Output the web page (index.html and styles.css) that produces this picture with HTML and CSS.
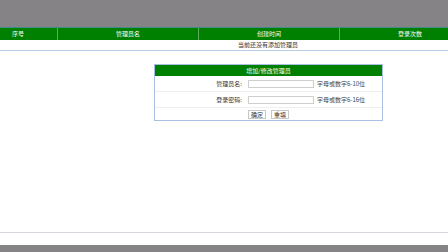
FILE: index.html
```
<!DOCTYPE html>
<html lang="zh-CN">
<head>
    <meta charset="UTF-8">
    <meta name="viewport" content="width=device-width, initial-scale=1.0">
    <title>管理员管理</title>
    <link rel="stylesheet" href="styles.css">
</head>
<body>
    <div class="topbar"></div>
    <div class="page">
        <div class="list-head">
            <div class="col col-id">序号</div>
            <div class="col">管理员名</div>
            <div class="col">创建时间</div>
            <div class="col col-count">登录次数</div>
        </div>
        <div class="empty">当前还没有添加管理员</div>

        <form class="panel" id="admin-form">
            <div class="panel-head">增加/修改管理员</div>
            <div class="form-row">
                <label for="admin-name">管理员名:</label>
                <div class="field">
                    <input type="text" id="admin-name">
                    <span class="hint">字母或数字6-10位</span>
                </div>
            </div>
            <div class="form-row">
                <label for="admin-pass">登录密码:</label>
                <div class="field">
                    <input type="password" id="admin-pass">
                    <span class="hint">字母或数字6-16位</span>
                </div>
            </div>
            <div class="form-row buttons">
                <span></span>
                <div class="field">
                    <button type="submit">确定</button>
                    <button type="reset">重填</button>
                </div>
            </div>
        </form>
    </div>
    <div class="footer">
        <div class="footer-bar"></div>
    </div>
</body>
</html>
```
FILE: styles.css
```
html, body {
    margin: 0;
    height: 100%;
    overflow: hidden;
}
body {
    display: flex;
    flex-direction: column;
    font-family: "Noto Sans CJK SC", "Liberation Sans", sans-serif;
    font-size: 6px;
    color: #333;
    background: #fff;
}
.topbar {
    height: 27px;
    background: #858385;
    border-bottom: 1px solid #3f8a8a;
}
.page {
    flex: 1;
}
.list-head {
    display: grid;
    grid-template-columns: 57px 141px 141px 1fr;
    height: 12px;
    line-height: 12px;
    background: #008000;
    color: #fff;
}
.col {
    text-align: center;
    border-left: 1px solid #5aab5a;
}
.col-id {
    border-left: none;
    text-align: left;
    padding-left: 12px;
}
.col-count {
    text-align: left;
    padding-left: 58px;
}
.empty {
    height: 10px;
    line-height: 10px;
    padding-left: 88px;
    text-align: center;
    border-bottom: 1px solid #b9cbe6;
}
.panel {
    width: 227px;
    margin: 13px 0 0 154px;
    border: 1px solid #a9bfe3;
}
.panel-head {
    height: 11px;
    line-height: 11px;
    background: #008000;
    color: #fff;
    text-align: center;
}
.form-row {
    display: grid;
    grid-template-columns: 90px 1fr;
    align-items: center;
    height: 15px;
    border-bottom: 1px solid #eeeeee;
}
.form-row label {
    text-align: right;
    padding-right: 3px;
}
.form-row.buttons {
    height: 12px;
    border-bottom: none;
}
.field {
    display: flex;
    align-items: center;
    gap: 3px;
    padding-left: 3px;
}
input {
    width: 64px;
    height: 6px;
    padding: 0;
    margin: 0;
    border: 1px solid #cfcfcf;
}
.hint {
    color: #444;
}
button {
    width: 18px;
    height: 9px;
    padding: 0;
    margin: 0 2px 0 0;
    font-family: inherit;
    font-size: 6px;
    line-height: 7px;
    color: #333;
    background: #fff;
    border: 1px solid #c8c8c8;
}
.footer {
    height: 19px;
    border-top: 1px solid #d8d7e0;
    display: flex;
    flex-direction: column;
    justify-content: flex-end;
}
.footer-bar {
    height: 7px;
    background: #858385;
}
```
